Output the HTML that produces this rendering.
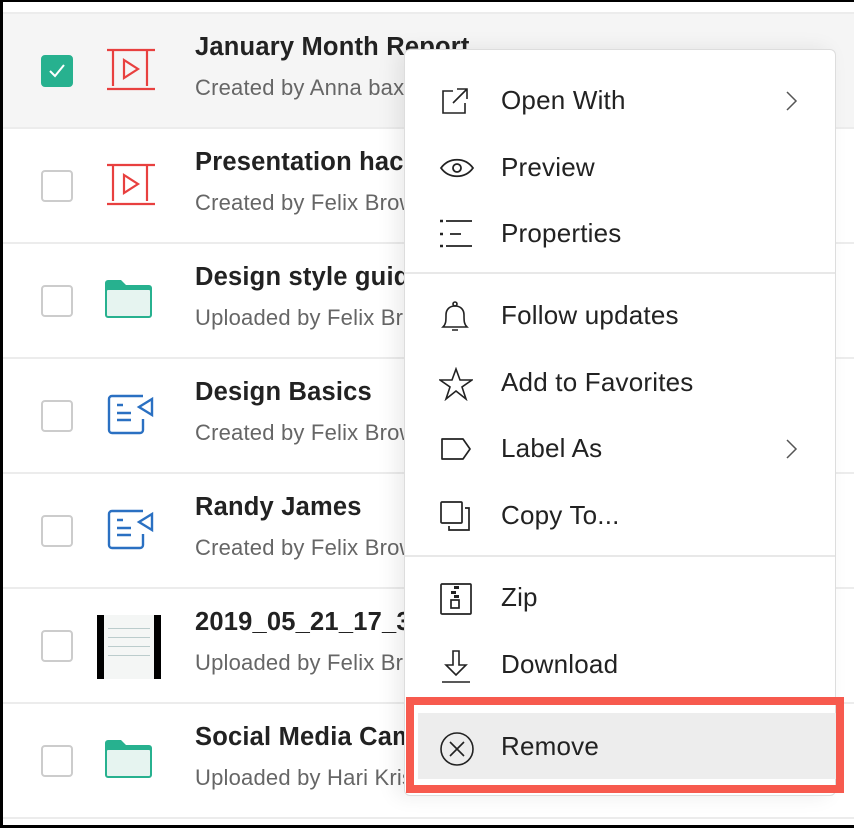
<!DOCTYPE html>
<html><head><style>
*{margin:0;padding:0;box-sizing:border-box}
html,body{width:854px;height:828px;overflow:hidden}
body{background:#000;position:relative;font-family:"Liberation Sans",sans-serif}
.page{position:absolute;left:3px;top:2px;width:851px;height:823px;background:#fff;overflow:hidden}
.row{position:absolute;left:0;width:851px;height:115px;border-top:2px solid #ececec}
.cb{position:absolute;left:38px;top:41px;width:32px;height:32px;border:2px solid #ccc;border-radius:4px;background:#fff}
.cb.on{background:#27b18f;border-color:#27b18f}
.ic{position:absolute;left:100px;top:33px}
.t{position:absolute;left:192px;top:19px;font-size:25.5px;font-weight:bold;color:#222;white-space:nowrap;letter-spacing:0.2px}
.s{position:absolute;left:192px;top:61px;font-size:22px;color:#666;white-space:nowrap;letter-spacing:0.2px}
.menu{position:absolute;left:401px;top:47px;width:432px;height:747px;background:#fff;border:1px solid #ddd;border-radius:6px;box-shadow:-8px 0 20px rgba(0,0,0,0.08)}
.mi{position:absolute;left:0;width:430px;height:66px}
.mi svg.i{position:absolute;left:34px;top:17px}
.mi span{position:absolute;left:96px;top:17px;font-size:26px;color:#222;letter-spacing:0.2px}
.mi svg.chev{position:absolute;left:380px;top:22px}
.div{position:absolute;left:0;width:430px;height:2px;background:#e8e8e8}
</style></head><body><div class="page">
<div class="row" style="top:10px;background:#f5f5f5"><div class="cb on"><svg width="28" height="28" viewBox="0 0 28 28"><path d="M7 14l5 5 9-11" stroke="#fff" stroke-width="2" fill="none"/></svg></div>
<svg class="ic" width="52" height="44" viewBox="0 0 52 44"><g stroke="#e8403f" stroke-width="2.2" fill="none"><path d="M4 3h48M4 42h48M10 4v35M44 4v35M21 13l14 9-14 9z"/></g></svg>
<div class="t">January Month Report</div><div class="s">Created by Anna bax</div></div>
<div class="row" style="top:125px"><div class="cb"></div>
<svg class="ic" width="52" height="44" viewBox="0 0 52 44"><g stroke="#e8403f" stroke-width="2.2" fill="none"><path d="M4 3h48M4 42h48M10 4v35M44 4v35M21 13l14 9-14 9z"/></g></svg>
<div class="t">Presentation hacks</div><div class="s">Created by Felix Brown</div></div>
<div class="row" style="top:240px"><div class="cb"></div>
<svg class="ic" width="52" height="46" viewBox="0 0 52 46" style="top:33px"><path d="M2 6a3 3 0 0 1 3-3h13l5 5h23a3 3 0 0 1 3 3v27a3 3 0 0 1-3 3H5a3 3 0 0 1-3-3z" fill="#27b18f"/><rect x="4" y="13" width="43" height="26" rx="1" fill="#e6f4f0"/></svg>
<div class="t">Design style guide</div><div class="s">Uploaded by Felix Brown</div></div>
<div class="row" style="top:355px"><div class="cb"></div>
<svg class="ic" width="52" height="46" viewBox="0 0 52 46"><g stroke="#2a70c2" stroke-width="2.4" fill="none"><path d="M40 4H9a3 3 0 0 0-3 3v31a3 3 0 0 0 3 3h28a3 3 0 0 0 3-3V27M14 13h6M14 21h14M14 28h14M36 15l13-8v16z"/></g></svg>
<div class="t">Design Basics</div><div class="s">Created by Felix Brown</div></div>
<div class="row" style="top:470px"><div class="cb"></div>
<svg class="ic" width="52" height="46" viewBox="0 0 52 46"><g stroke="#2a70c2" stroke-width="2.4" fill="none"><path d="M40 4H9a3 3 0 0 0-3 3v31a3 3 0 0 0 3 3h28a3 3 0 0 0 3-3V27M14 13h6M14 21h14M14 28h14M36 15l13-8v16z"/></g></svg>
<div class="t">Randy James</div><div class="s">Created by Felix Brown</div></div>
<div class="row" style="top:585px"><div class="cb"></div>
<div style="position:absolute;left:94px;top:26px;width:64px;height:64px;background:#000"><div style="position:absolute;left:7px;top:0;width:50px;height:64px;background:#f4f6f5"><div style="margin:8px 4px;height:40px;background:repeating-linear-gradient(#f4f6f5 0 5px,#bcc 5px 6px,#f4f6f5 6px 9px)"></div></div></div>
<div class="t">2019_05_21_17_34.png</div><div class="s">Uploaded by Felix Brown</div></div>
<div class="row" style="top:700px"><div class="cb"></div>
<svg class="ic" width="52" height="46" viewBox="0 0 52 46" style="top:33px"><path d="M2 6a3 3 0 0 1 3-3h13l5 5h23a3 3 0 0 1 3 3v27a3 3 0 0 1-3 3H5a3 3 0 0 1-3-3z" fill="#27b18f"/><rect x="4" y="13" width="43" height="26" rx="1" fill="#e6f4f0"/></svg>
<div class="t">Social Media Campaign</div><div class="s">Uploaded by Hari Krishna</div></div>
<div class="row" style="top:815px;height:8px"></div>

<div class="menu">
<div class="mi" style="top:18px"><svg class="i" width="32" height="32" viewBox="0 0 32 32"><g stroke="#222" stroke-width="1.6" fill="none"><path d="M14 6H4v22h22V18M18 4h10v10M28 4L14 18"/></g></svg><span>Open With</span><svg class="chev" width="14" height="22" viewBox="0 0 14 22"><path d="M2 2l9 9-9 9" stroke="#555" stroke-width="1.5" fill="none"/></svg></div>
<div class="mi" style="top:85px"><svg class="i" width="36" height="32" viewBox="0 0 36 32"><g stroke="#222" stroke-width="1.8" fill="none"><path d="M2 16c8-11 24-11 32 0c-8 11-24 11-32 0z"/><circle cx="18" cy="16" r="4"/></g></svg><span>Preview</span></div>
<div class="mi" style="top:151px"><svg class="i" width="36" height="32" viewBox="0 0 36 32"><g stroke="#222" stroke-width="1.8"><path d="M7 3h26M11 16h11M7 28h26"/><path d="M1 3h3M1 16h3M1 28h3" stroke-width="2.5"/></g></svg><span>Properties</span></div>
<div class="div" style="top:222px"></div>
<div class="mi" style="top:233px"><svg class="i" width="32" height="34" viewBox="0 0 32 34"><g stroke="#222" stroke-width="1.6" fill="none"><circle cx="16" cy="4" r="2"/><path d="M4 27c3-3 3-6 3-12c0-6 4-9 9-9s9 3 9 9c0 6 0 9 3 12zM13 30h6"/></g></svg><span>Follow updates</span></div>
<div class="mi" style="top:300px"><svg class="i" width="34" height="34" viewBox="0 0 34 34"><path d="M17 2l4 11h12l-10 7 4 12-10-8-10 8 4-12-10-7h12z" stroke="#222" stroke-width="1.6" fill="none"/></svg><span>Add to Favorites</span></div>
<div class="mi" style="top:366px"><svg class="i" width="34" height="32" viewBox="0 0 34 32"><path d="M3 6h21l7 10-7 10H3z" stroke="#222" stroke-width="1.7" fill="none" stroke-linejoin="round"/></svg><span>Label As</span><svg class="chev" width="14" height="22" viewBox="0 0 14 22"><path d="M2 2l9 9-9 9" stroke="#555" stroke-width="1.5" fill="none"/></svg></div>
<div class="mi" style="top:433px"><svg class="i" width="34" height="34" viewBox="0 0 34 34"><g stroke="#222" stroke-width="1.7" fill="none"><rect x="2" y="2" width="21" height="21" rx="1"/><path d="M26 8h4v22H10v-4"/></g></svg><span>Copy To...</span></div>
<div class="div" style="top:505px"></div>
<div class="mi" style="top:515px"><svg class="i" width="34" height="34" viewBox="0 0 34 34"><g stroke="#222" stroke-width="1.7" fill="none"><rect x="2" y="2" width="30" height="30" rx="1"/><rect x="12" y="18" width="8" height="8"/></g><g fill="#222"><rect x="15" y="4" width="5" height="3"/><rect x="12" y="9" width="5" height="3"/><rect x="15" y="13" width="5" height="3"/></g></svg><span>Zip</span></div>
<div class="mi" style="top:582px"><svg class="i" width="34" height="36" viewBox="0 0 34 36"><g stroke="#222" stroke-width="1.6" fill="none"><path d="M14 2h6v14h7l-10 10-10-10h7z"/><path d="M3 33h28"/></g></svg><span>Download</span></div>
<div style="position:absolute;left:13px;top:663px;width:418px;height:66px;background:#ededed"></div>
<div class="mi" style="top:664px"><svg class="i" width="36" height="36" viewBox="0 0 36 36"><g stroke="#222" stroke-width="1.6" fill="none"><circle cx="18" cy="18" r="16"/><path d="M11 11l14 14M25 11l-14 14"/></g></svg><span>Remove</span></div>
</div>
<div style="position:absolute;left:403px;top:695px;width:438px;height:96px;border:8px solid #f75a4e"></div>
</div></body></html>
